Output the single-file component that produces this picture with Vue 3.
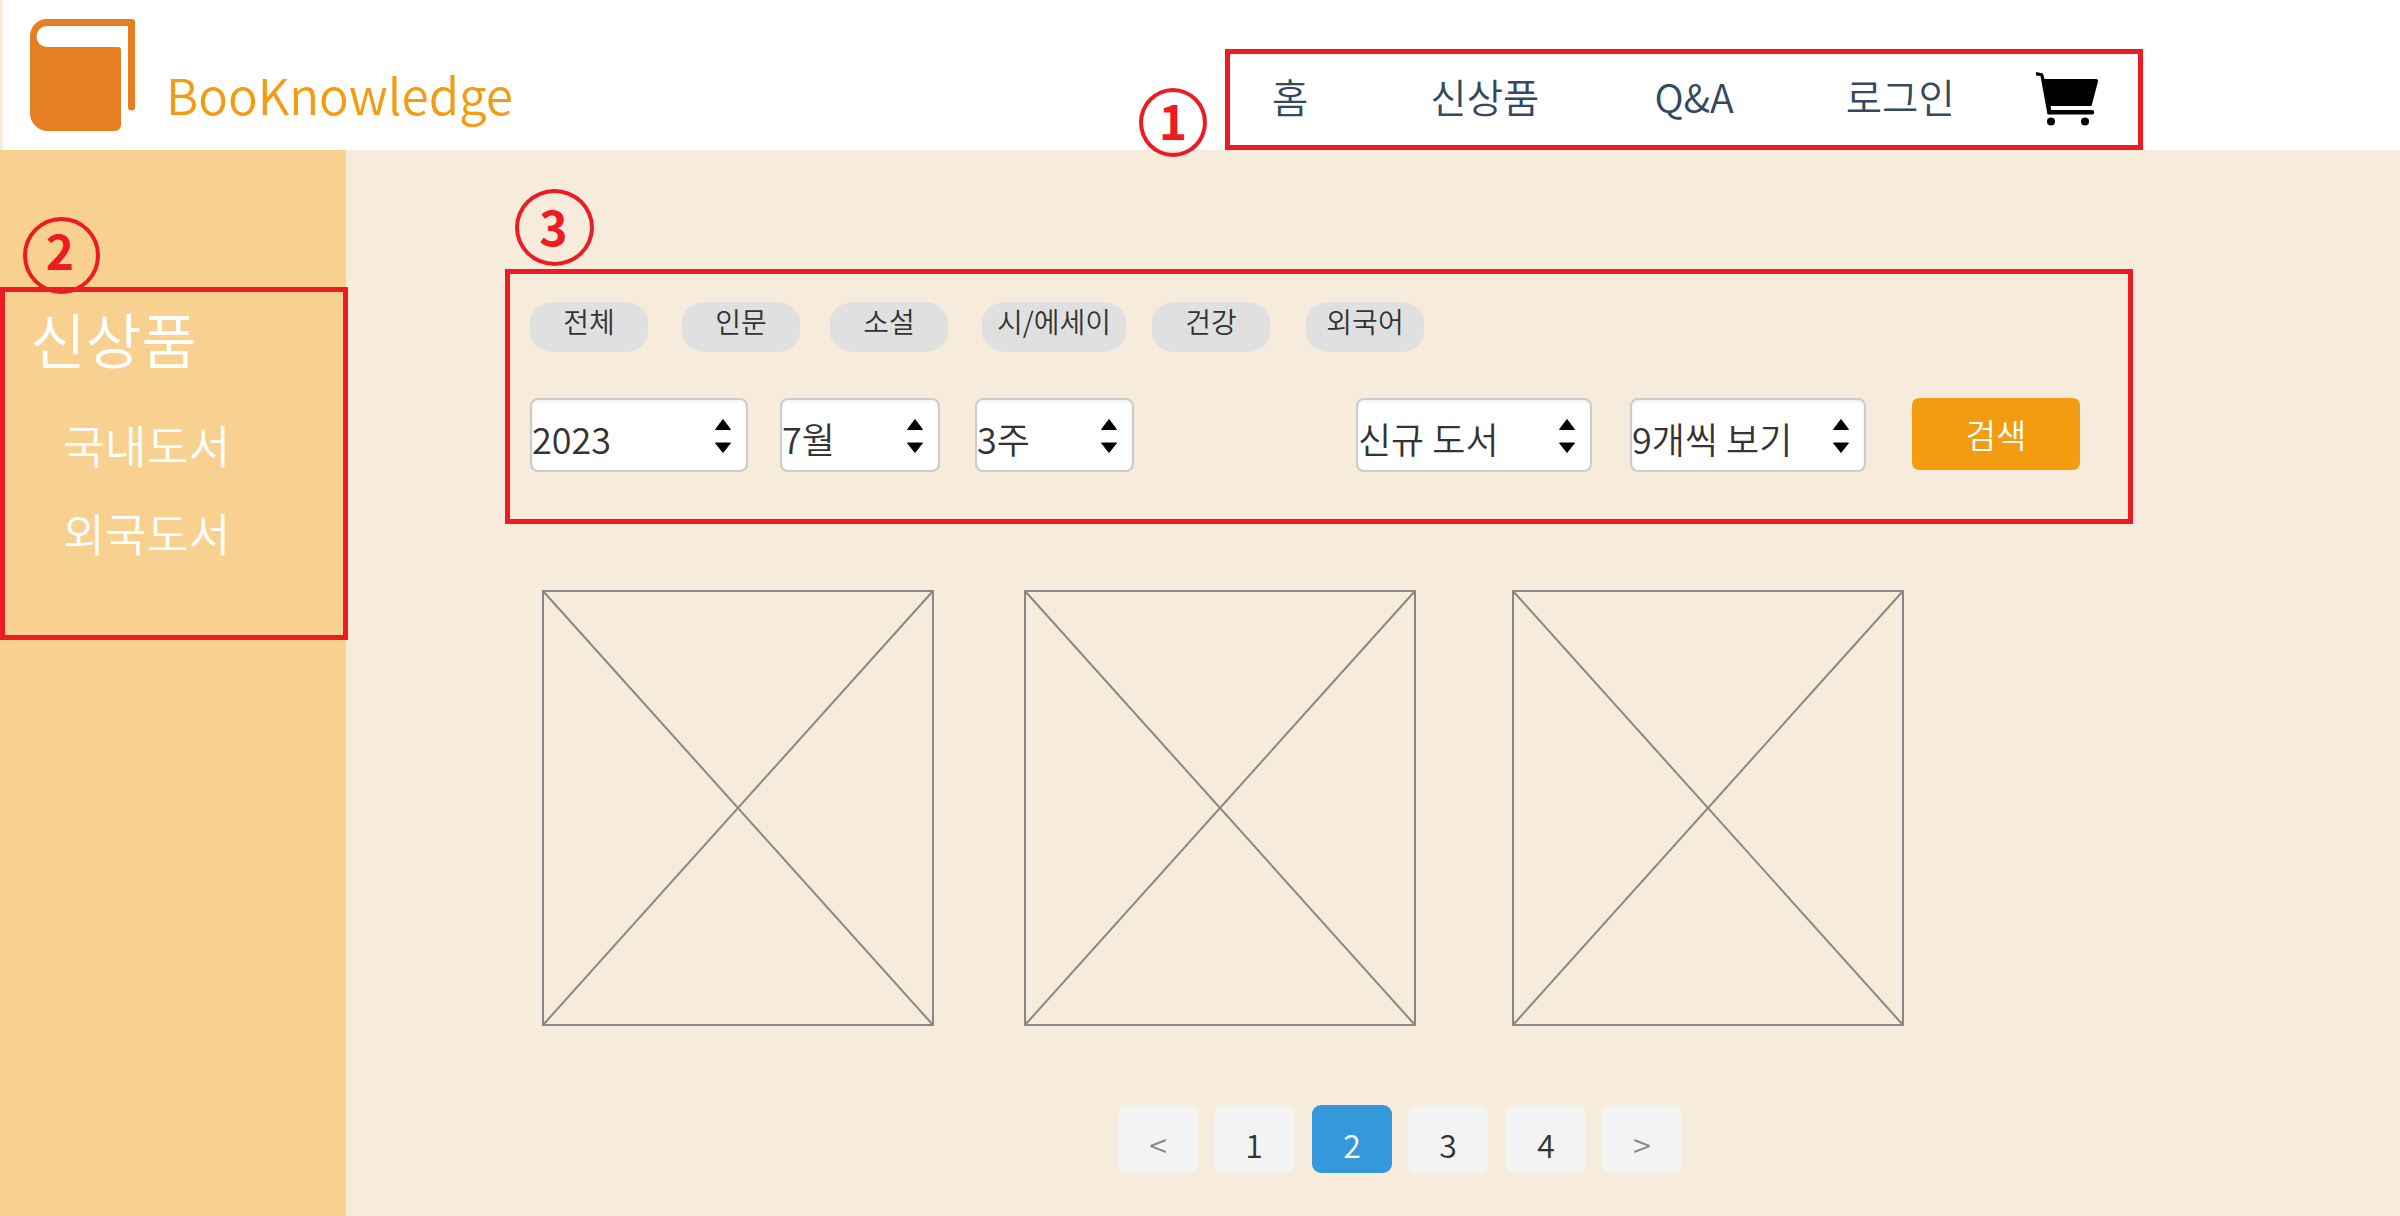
<script setup>
const navItems = ['홈', '신상품', 'Q&A', '로그인'];
const categories = ['전체', '인문', '소설', '시/에세이', '건강', '외국어'];
const dateFilters = [
  { label: '2023', cls: 'sel-year' },
  { label: '7월', cls: 'sel-month' },
  { label: '3주', cls: 'sel-week' },
];
const listFilters = [
  { label: '신규 도서', cls: 'sel-kind' },
  { label: '9개씩 보기', cls: 'sel-count' },
];
const books = [1, 2, 3];
const pages = ['<', '1', '2', '3', '4', '>'];
</script>

<template>
  <div class="page">
    <header class="topbar">
      <svg class="logo" viewBox="0 0 105 112" aria-hidden="true">
        <path d="M17 0H102a3 3 0 0 1 3 3V88a3.5 3.5 0 0 1-7 0V7H17a10.5 10.5 0 0 0 0 21H88a3 3 0 0 1 3 3V106a6 6 0 0 1-6 6H18a18 18 0 0 1-18-18V17A17 17 0 0 1 17 0Z" fill="#e67e22" />
      </svg>
      <span class="brand">BooKnowledge</span>
      <nav class="nav">
        <a v-for="item in navItems" :key="item" class="nav-link">{{ item }}</a>
        <svg class="cart" viewBox="0 0 62 54" aria-hidden="true">
          <path d="M0 0 7 1.500 8.500 7H60a2 2 0 0 1 2 2.500L55.500 34H14.500L15.200 38H56a2 2 0 0 1 0 4.500H11.500L4.500 4 0 3.500Z" fill="#000" />
          <ellipse cx="15" cy="49.500" rx="4" ry="4" fill="#000" />
          <ellipse cx="49" cy="49.500" rx="4" ry="4" fill="#000" />
        </svg>
      </nav>
    </header>

    <div class="content">
      <aside class="sidebar">
        <div class="side-box">
          <h2 class="side-title">신상품</h2>
          <a class="side-link">국내도서</a>
          <a class="side-link">외국도서</a>
        </div>
      </aside>

      <main class="main">
        <section class="filters">
          <div class="chips">
            <span v-for="cat in categories" :key="cat" class="chip">{{ cat }}</span>
          </div>
          <div class="controls">
            <div v-for="f in dateFilters" :key="f.label" class="select" :class="f.cls">
              <span>{{ f.label }}</span>
              <svg class="arrows" viewBox="0 0 16 34" aria-hidden="true">
                <path d="M8 0.500 15.500 10.500H0.500Z" fill="#000" stroke="#000" stroke-linejoin="round" />
                <path d="M8 33.500 15.500 24H0.500Z" fill="#000" stroke="#000" stroke-linejoin="round" />
              </svg>
            </div>
            <div v-for="f in listFilters" :key="f.label" class="select" :class="f.cls">
              <span>{{ f.label }}</span>
              <svg class="arrows" viewBox="0 0 16 34" aria-hidden="true">
                <path d="M8 0.500 15.500 10.500H0.500Z" fill="#000" stroke="#000" stroke-linejoin="round" />
                <path d="M8 33.500 15.500 24H0.500Z" fill="#000" stroke="#000" stroke-linejoin="round" />
              </svg>
            </div>
            <button class="search-btn">검색</button>
          </div>
        </section>

        <section class="books">
          <svg v-for="b in books" :key="b" class="thumb" viewBox="0 0 392 436" preserveAspectRatio="none" aria-hidden="true">
            <rect x="1" y="1" width="390" height="434" fill="none" stroke="#888" stroke-width="2" />
            <path d="M1 1 391 435M391 1 1 435" fill="none" stroke="#888" stroke-width="2" />
          </svg>
        </section>

        <div class="pager">
          <button
            v-for="p in pages"
            :key="p"
            class="page-btn"
            :class="{ active: p === '2', arrow: p === '<' || p === '>' }"
          >{{ p }}</button>
        </div>
      </main>
    </div>

    <span class="marker marker-1">1</span>
    <span class="marker marker-2">2</span>
    <span class="marker marker-3">3</span>
  </div>
</template>

<style>
body {
  margin: 0;
  background: #f7ecdb;
}
</style>

<style scoped>
.page {
  position: relative;
  width: 2400px;
  height: 1216px;
  overflow: hidden;
  background: #f7ecdb;
  font-family: "Noto Sans CJK KR", "Noto Sans", sans-serif;
  font-weight: 350;
  color: #333;
}

.topbar {
  display: flex;
  align-items: flex-start;
  box-sizing: border-box;
  height: 150px;
  margin-left: 3px;
  padding-right: 257px;
  background: #fff;
}

.logo {
  width: 105px;
  height: 112px;
  margin: 19px 0 0 27px;
  flex: none;
}

.brand {
  margin: 58px 0 0 31px;
  font-size: 49.4px;
  line-height: 72px;
  font-weight: 350;
  color: #f39c12;
}

.nav {
  display: flex;
  align-items: flex-start;
  box-sizing: border-box;
  width: 918px;
  height: 101px;
  margin: 49px 0 0 auto;
  padding-left: 42px;
  border: 5px solid #ed1c24;
}

.nav-link {
  margin-top: 13px;
  font-size: 39.5px;
  line-height: 58px;
  color: #34495e;
}

.nav-link:nth-child(2) {
  margin-left: 122px;
}

.nav-link:nth-child(3) {
  margin-left: 115px;
}

.nav-link:nth-child(4) {
  margin-left: 112px;
}

.cart {
  width: 62px;
  height: 54px;
  margin: 18px 0 0 81px;
}

.content {
  display: flex;
  height: 1066px;
}

.sidebar {
  box-sizing: border-box;
  flex: none;
  width: 346px;
  padding-top: 137px;
  background: #f8d190;
}

.side-box {
  box-sizing: border-box;
  display: flex;
  flex-direction: column;
  align-items: flex-start;
  width: 348px;
  height: 353px;
  padding: 4px 0 0 25px;
  border: 5px solid #ed1c24;
  color: #fff;
}

.side-title {
  margin: 0 0 32px;
  font-size: 60.5px;
  line-height: 84px;
  font-weight: 350;
}

.side-link {
  margin: 0 0 24px 33px;
  font-size: 45.5px;
  line-height: 64px;
}

.main {
  flex: 1;
  padding: 119px 0 0 159px;
}

.filters {
  box-sizing: border-box;
  width: 1628px;
  height: 255px;
  padding: 28px 0 0 20px;
  border: 5px solid #ed1c24;
}

.chips {
  display: flex;
}

.chip {
  box-sizing: border-box;
  display: flex;
  justify-content: center;
  width: 118px;
  height: 50px;
  border-radius: 24px / 20px;
  background: #e0e0e0;
  font-size: 28px;
  line-height: 38px;
}

.chip:nth-child(2) {
  margin-left: 34px;
}

.chip:nth-child(3) {
  margin-left: 30px;
}

.chip:nth-child(4) {
  width: 144px;
  margin-left: 34px;
}

.chip:nth-child(5) {
  margin-left: 26px;
}

.chip:nth-child(6) {
  margin-left: 36px;
}

.controls {
  display: flex;
  align-items: flex-start;
  margin-top: 46px;
}

.select {
  box-sizing: border-box;
  display: flex;
  justify-content: space-between;
  height: 74px;
  padding: 12px 15px 0 0;
  border: 2px solid #ccc;
  border-radius: 8px;
  background: #fff;
  box-shadow: inset 0 2px 3px rgba(0, 0, 0, 0.06);
  font-size: 36px;
  line-height: 52px;
}

.arrows {
  width: 16px;
  height: 34px;
  margin-top: 7px;
}

.sel-year {
  width: 218px;
}

.sel-month {
  width: 160px;
  margin-left: 32px;
}

.sel-week {
  width: 159px;
  margin-left: 35px;
}

.sel-kind {
  width: 236px;
  margin-left: 222px;
}

.sel-count {
  width: 236px;
  margin-left: 38px;
}

.search-btn {
  width: 168px;
  height: 72px;
  margin-left: 46px;
  padding: 0;
  border: none;
  border-radius: 7px;
  background: #f39c12;
  color: #fff;
  font-family: inherit;
  font-size: 33px;
  font-weight: 350;
}

.books {
  display: flex;
  margin: 66px 0 0 37px;
}

.thumb {
  width: 392px;
  height: 436px;
}

.thumb:nth-child(2) {
  margin-left: 90px;
}

.thumb:nth-child(3) {
  margin-left: 96px;
}

.pager {
  display: flex;
  margin: 79px 0 0 613px;
}

.page-btn {
  width: 80px;
  height: 68px;
  margin-right: 16px;
  padding: 10px 0 0;
  border: none;
  border-radius: 9px;
  background: #f3f3f3;
  color: #333;
  font-family: inherit;
  font-size: 32px;
  font-weight: 350;
}

.page-btn:nth-child(2),
.page-btn:nth-child(4) {
  margin-right: 18px;
}

.page-btn.arrow {
  color: #888;
}

.page-btn.active {
  background: #3498db;
  color: #fff;
}

.marker {
  position: absolute;
  box-sizing: border-box;
  display: flex;
  align-items: center;
  justify-content: center;
  border: 4px solid #ed1c24;
  border-radius: 50%;
  color: #ed1c24;
  font-size: 48px;
  font-weight: 700;
  line-height: 1;
}

.marker-1 {
  left: 1139px;
  top: 88px;
  width: 68px;
  height: 69px;
  padding-bottom: 8px;
}

.marker-2 {
  left: 23px;
  top: 217px;
  width: 77px;
  height: 77px;
  padding: 0 3px 14px 0;
}

.marker-3 {
  left: 515px;
  top: 189px;
  width: 79px;
  height: 77px;
  padding: 0 2px 6px 0;
}
</style>
